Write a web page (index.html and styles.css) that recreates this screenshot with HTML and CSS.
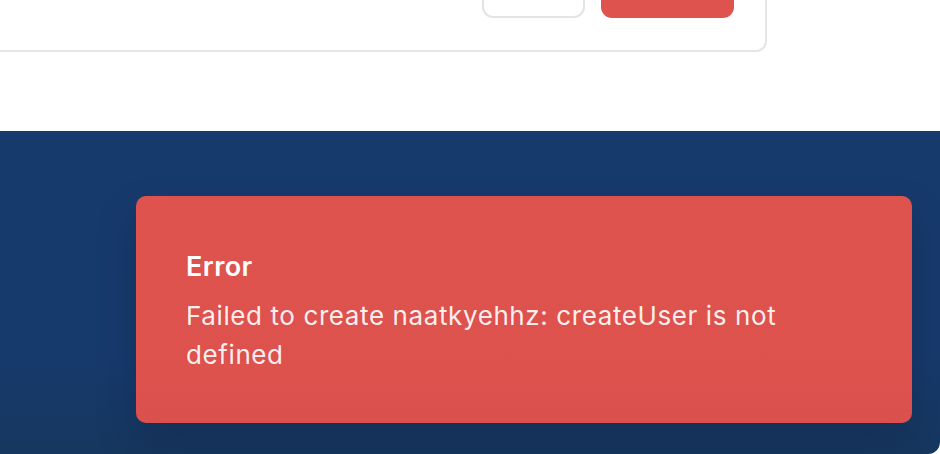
FILE: index.html
```html
<!DOCTYPE html>
<html lang="en">
<head>
<meta charset="utf-8">
<title>Error toast</title>
<link rel="stylesheet" href="styles.css">
</head>
<body>
  <section class="page">
    <div class="card">
      <div class="card-actions">
        <button class="btn btn-secondary" type="button"></button>
        <button class="btn btn-danger" type="button"></button>
      </div>
    </div>
  </section>
  <section class="footer">
    <div class="toast" role="alert">
      <div class="toast-title">Error</div>
      <div class="toast-body">Failed to create naatkyehhz: createUser is not defined</div>
    </div>
  </section>
</body>
</html>
```
FILE: styles.css
```css
html, body {
  margin: 0;
  padding: 0;
}
body {
  width: 940px;
  height: 454px;
  overflow: hidden;
  background: #ffffff;
  font-family: Inter, "Noto Sans", sans-serif;
}
.page {
  height: 131px;
  overflow: hidden;
}
.card {
  margin-top: -41px;
  margin-left: -20px;
  width: 787px;
  box-sizing: border-box;
  border: 2px solid #e5e5e5;
  border-radius: 11px;
  padding: 0 31px 32px 0;
  background: #fff;
}
.card-actions {
  display: flex;
  justify-content: flex-end;
  gap: 16px;
}
.btn {
  height: 57px;
  border-radius: 11px;
  padding: 0;
  font: inherit;
}
.btn-secondary {
  width: 103px;
  background: #fff;
  border: 2px solid #e4e4e4;
}
.btn-danger {
  width: 133px;
  background: #df534f;
  border: none;
}
.footer {
  height: 323px;
  background: linear-gradient(180deg, #173a6c 0%, #173a6c 70%, #16375f 100%);
  border-bottom-right-radius: 12px;
  padding-top: 65px;
  box-sizing: border-box;
}
.toast {
  margin-left: 136px;
  width: 776px;
  height: 227px;
  box-sizing: border-box;
  padding: 56px 70px 0 50px;
  background: linear-gradient(180deg, #df534f 0%, #de524e 80%, #d9504c 100%);
  border-radius: 10px;
  color: #fff;
  box-shadow: 0 20px 40px rgba(10, 25, 50, 0.22);
}
.toast-title {
  font-size: 27px;
  font-weight: 600;
  line-height: 30px;
  letter-spacing: 0.4px;
}
.toast-body {
  margin-top: 14px;
  font-size: 26px;
  line-height: 39px;
  letter-spacing: 0.6px;
  color: rgba(255, 255, 255, 0.92);
}
```
